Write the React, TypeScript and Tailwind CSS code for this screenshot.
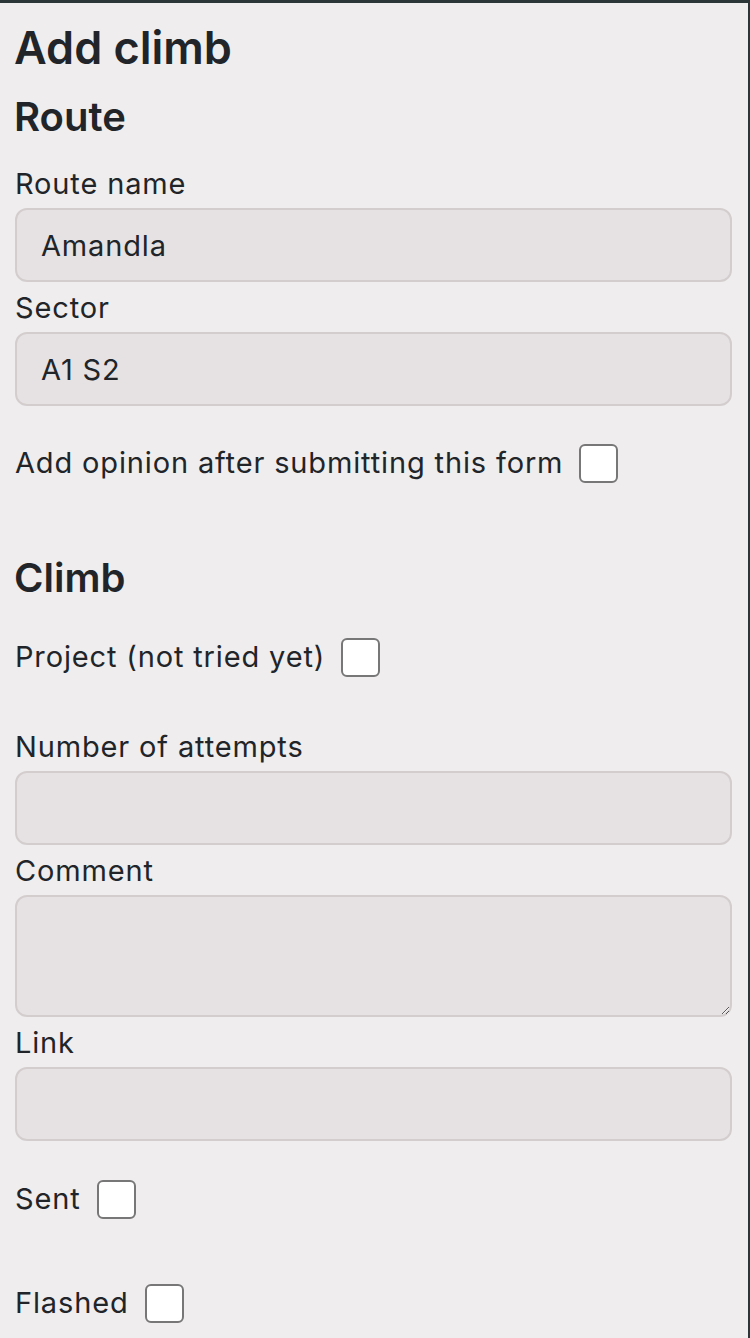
import React from 'react';

const font = { fontFamily: 'Inter, "Open Sans", sans-serif' };

function Label({ children, className = '' }: { children: React.ReactNode; className?: string }) {
  return (
    <label className={`block text-[29px] leading-[44px] tracking-[0.85px] text-[#212529] ${className}`}>
      {children}
    </label>
  );
}

function TextInput({ value = '' }: { value?: string }) {
  return (
    <input
      type="text"
      defaultValue={value}
      className="mt-[2px] block w-full h-[74px] px-[24px] bg-[#e6e2e3] border-2 border-[#d3cdce] rounded-[12px] text-[29px] tracking-[0.85px] text-[#212529] outline-none"
      style={font}
    />
  );
}

function CheckRow({ label, className = '' }: { label: string; className?: string }) {
  return (
    <div className={`flex items-center h-[44px] ${className}`}>
      <span className="text-[29px] leading-[44px] tracking-[0.85px] text-[#212529] whitespace-nowrap">{label}</span>
      <input
        type="checkbox"
        className="ml-[16px] appearance-none shrink-0 w-[39px] h-[39px] bg-white border-2 border-[#777777] rounded-[6px]"
      />
    </div>
  );
}

export default function App() {
  return (
    <div
      className="min-h-screen bg-[#efedee] border-t-[3px] border-r-[2px] border-[#2a3638] pl-[15px] pr-[16px]"
      style={font}
    >
      <h1 className="mt-[18px] -ml-[1px] text-[45px] leading-[54px] font-semibold text-[#212529]">Add climb</h1>

      {/* ROUTE */}
      <h2 className="mt-[19px] -ml-[1px] text-[40px] leading-[46px] font-semibold text-[#212529]">Route</h2>
      <Label className="mt-[22px]">Route name</Label>
      <TextInput value="Amandla" />
      <Label className="mt-[4px]">Sector</Label>
      <TextInput value="A1 S2" />
      <CheckRow label="Add opinion after submitting this form" className="mt-[35px]" />

      {/* CLIMB */}
      <h2 className="mt-[70px] -ml-[1px] text-[40px] leading-[46px] font-semibold text-[#212529]">Climb</h2>
      <CheckRow label="Project (not tried yet)" className="mt-[34px]" />

      <Label className="mt-[46px]">Number of attempts</Label>
      <TextInput />
      <Label className="mt-[4px]">Comment</Label>
      <textarea
        className="mt-[2px] block w-full h-[122px] px-[24px] py-[12px] bg-[#e6e2e3] border-2 border-[#d3cdce] rounded-[12px] text-[29px] text-[#212529] outline-none"
        style={font}
      />
      <Label className="mt-[4px]">Link</Label>
      <TextInput />

      <CheckRow label="Sent" className="mt-[36px]" />
      <CheckRow label="Flashed" className="mt-[60px]" />
    </div>
  );
}
